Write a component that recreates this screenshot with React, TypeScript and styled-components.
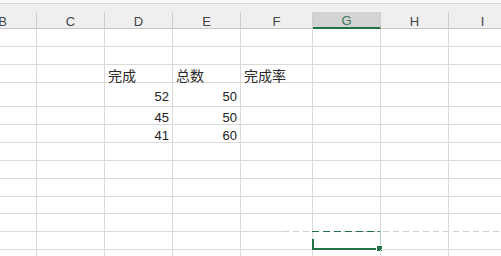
import React from "react";
import styled, { createGlobalStyle, css } from "styled-components";

const Global = createGlobalStyle`
  html, body { margin: 0; padding: 0; background: #fff; }
  body { font-family: "Liberation Sans", "Noto Sans CJK SC", sans-serif; }
`;

const COLS = ["B", "C", "D", "E", "F", "G", "H", "I"];
const WIDTHS = [68, 68, 68, 68, 72, 68, 68, 68];
const TEMPLATE = WIDTHS.map((w) => `${w}px`).join(" ");
const ROW_HEIGHTS = [18, 18, 18, 24, 18, 18, 18, 18, 18, 17, 18, 18, 18];
const SELECTED_COL = "G";
const SELECTED_ROW = 11;
const MARQUEE_ROW = 10;

type CellVal = { text: string; kind: "label" | "num" };
const DATA: Record<number, Record<string, CellVal>> = {
  2: {
    D: { text: "完成", kind: "label" },
    E: { text: "总数", kind: "label" },
    F: { text: "完成率", kind: "label" },
  },
  3: { D: { text: "52", kind: "num" }, E: { text: "50", kind: "num" } },
  4: { D: { text: "45", kind: "num" }, E: { text: "50", kind: "num" } },
  5: { D: { text: "41", kind: "num" }, E: { text: "60", kind: "num" } },
};

const Sheet = styled.div`
  width: 501px;
  height: 256px;
  overflow: hidden;
  background: #fff;
`;

const TopStrip = styled.div`
  height: 3px;
  background: #f8f8f8;
  border-bottom: 1px solid #d8d8d8;
`;

const HeaderRow = styled.div`
  display: grid;
  grid-template-columns: ${TEMPLATE};
  margin-left: -31px;
  height: 25px;
  padding-top: 8px;
  box-sizing: border-box;
  background: #efefef;
`;

const HeaderCell = styled.div<{ $selected?: boolean }>`
  box-sizing: border-box;
  height: 17px;
  border-right: 1px solid #cdcdcd;
  border-bottom: 1px solid #c6c6c6;
  display: flex;
  align-items: center;
  justify-content: center;
  padding-top: 2px;
  font-family: "Liberation Sans", sans-serif;
  font-size: 13px;
  color: #454545;
  ${(p) =>
    p.$selected &&
    css`
      background: #d3d3d3;
      border-bottom: 2px solid #217346;
      color: #3f7a58;
    `}
`;

const Row = styled.div<{ $h: number }>`
  position: relative;
  display: grid;
  grid-template-columns: ${TEMPLATE};
  margin-left: -31px;
  height: ${(p) => p.$h}px;
`;

const Cell = styled.div<{ $align: "left" | "right" }>`
  position: relative;
  box-sizing: border-box;
  border-right: 1px solid #dadada;
  border-bottom: 1px solid #dadada;
  display: flex;
  align-items: center;
  justify-content: ${(p) => (p.$align === "right" ? "flex-end" : "flex-start")};
  padding: 3px 3px 0 3px;
  color: #222;
  white-space: nowrap;
`;

const Label = styled.span`
  font-family: "Noto Sans CJK SC", "Liberation Sans", sans-serif;
  font-size: 14px;
  line-height: 14px;
  color: #2a2a2a;
`;

const Num = styled.span`
  font-family: "Liberation Sans", sans-serif;
  font-size: 13px;
  line-height: 13px;
  color: #222;
`;

/* copy marquee: dashed line over the grid line */
const Marquee = styled.div`
  position: absolute;
  left: 314px;
  right: 0;
  bottom: 0;
  height: 1px;
  background: repeating-linear-gradient(90deg, #cfcfcf 0 6px, #ffffff 6px 10px);
`;

/* active cell outline, drawn over the cell */
const Selection = styled.div`
  position: absolute;
  inset: -1px -1px -1px -1px;
  box-sizing: border-box;
  border-bottom: 2px solid #217346;
  border-right: 1px solid #a9cdb6;
  background: repeating-linear-gradient(90deg, #217346 0 7px, transparent 7px 11px) top left / 100% 1px no-repeat;
  pointer-events: none;

  &::before {
    content: "";
    position: absolute;
    left: 0;
    bottom: 0;
    width: 2px;
    height: 9px;
    background: #217346;
  }

  &::after {
    content: "";
    position: absolute;
    right: -3px;
    bottom: -4px;
    width: 5px;
    height: 5px;
    background: #217346;
    border: 1px solid #fff;
  }
`;

export default function App() {
  return (
    <>
      <Global />
      <Sheet>
        <TopStrip />
        <HeaderRow>
          {COLS.map((c) => (
            <HeaderCell key={c} $selected={c === SELECTED_COL}>
              {c}
            </HeaderCell>
          ))}
        </HeaderRow>
        {ROW_HEIGHTS.map((h, r) => (
          <Row key={r} $h={h}>
            {COLS.map((c) => {
              const v = DATA[r]?.[c];
              const selected = r === SELECTED_ROW && c === SELECTED_COL;
              return (
                <Cell key={c} $align={v?.kind === "num" ? "right" : "left"}>
                  {v && (v.kind === "num" ? <Num>{v.text}</Num> : <Label>{v.text}</Label>)}
                  {selected && <Selection />}
                </Cell>
              );
            })}
            {r === MARQUEE_ROW && <Marquee />}
          </Row>
        ))}
      </Sheet>
    </>
  );
}
